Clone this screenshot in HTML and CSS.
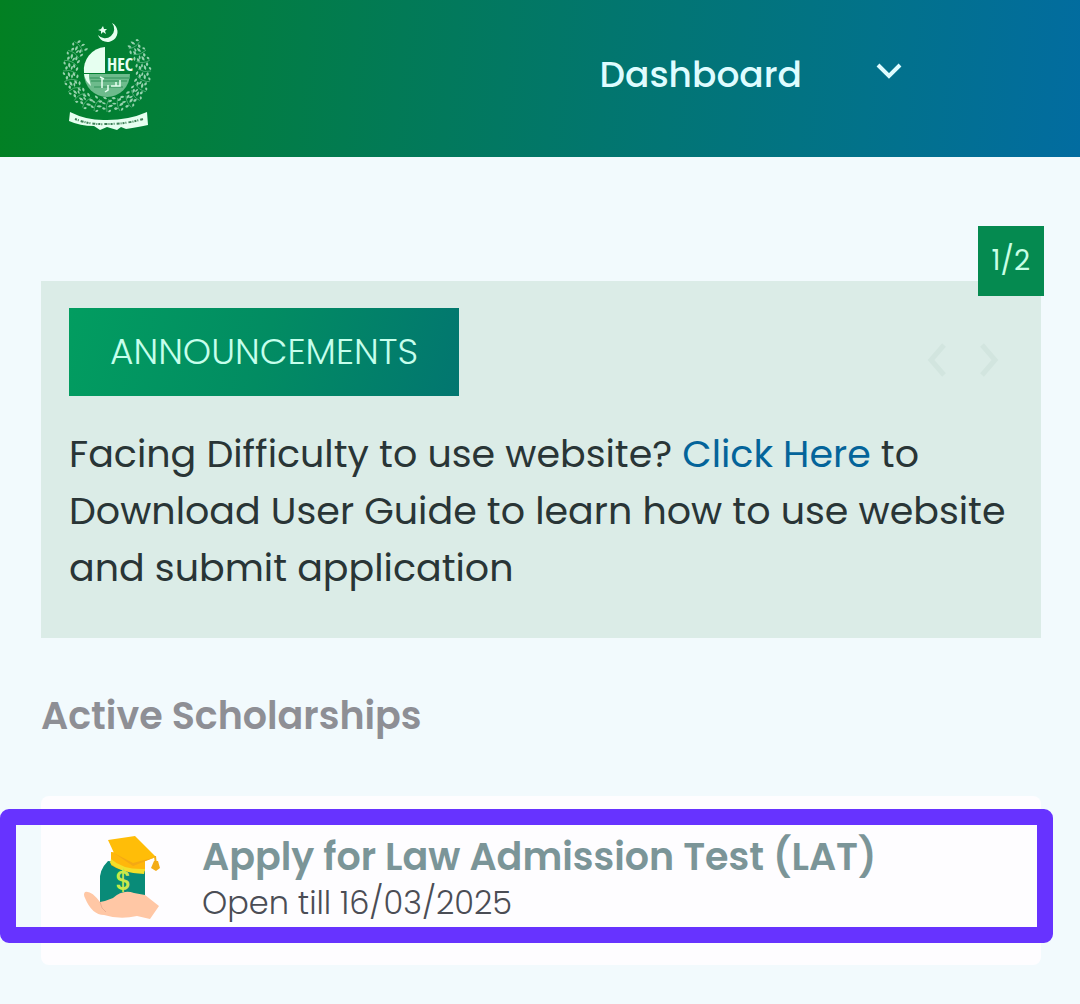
FILE: index.html
```html
<!DOCTYPE html>
<html lang="en">
<head>
<meta charset="utf-8">
<meta name="viewport" content="width=device-width, initial-scale=1">
<title>HEC Dashboard</title>
<link rel="stylesheet" href="styles.css">
</head>
<body>
<header class="topbar">
  <a class="logo" href="#" aria-label="HEC home">
    <svg width="94" height="114" viewBox="0 0 94 114" fill="#e6fff0">
      <defs>
        <g id="sprig">
          <path d="M0 -31q3-1 4 2q-3 1-4-2zM-1 -34q-4-1-4 2q3 1 4-2zM1 -36q4-1 4 2q-3 0-4-2zM-1 -39q-4-1-5 2q4 1 5-2zM1 -41q3-2 4 1q-2 2-4-1zM-1 -44q-3-1-3 2q2 1 3-2z"/>
          <path d="M-2 -31Q2 -37 0 -44" fill="none" stroke="#9ad9b4" stroke-width=".7"/>
        </g>
      </defs>
      <path d="M52 3a10 10 0 1 1-14 12a8 8 0 1 0 14-12z"/>
      <path d="M43 6l1 3 3 0-2 2 1 3-3-2-2 2 0-3-3-1 3-1z"/>
      <g transform="translate(47 51)" opacity=".65">
        <use href="#sprig" transform="rotate(48)"/><use href="#sprig" transform="rotate(62)"/>
        <use href="#sprig" transform="rotate(76)"/><use href="#sprig" transform="rotate(90)"/>
        <use href="#sprig" transform="rotate(104)"/><use href="#sprig" transform="rotate(118)"/>
        <use href="#sprig" transform="rotate(132)"/><use href="#sprig" transform="rotate(146)"/>
        <use href="#sprig" transform="rotate(162) translate(0 2)"/><use href="#sprig" transform="rotate(180) translate(0 3)"/>
        <use href="#sprig" transform="rotate(198) translate(0 2)"/><use href="#sprig" transform="rotate(214)"/>
        <use href="#sprig" transform="rotate(228)"/><use href="#sprig" transform="rotate(242)"/>
        <use href="#sprig" transform="rotate(256)"/><use href="#sprig" transform="rotate(270)"/>
        <use href="#sprig" transform="rotate(284)"/><use href="#sprig" transform="rotate(298)"/>
        <use href="#sprig" transform="rotate(312)"/>
      </g>
      <path d="M45 27v26H24A23 23 0 0 1 45 27z"/>
      <path d="M24 54h46A23 23 0 0 1 24 54z" fill="#6dbb8c"/>
      <path d="M24 54h5v4l2 8q-6-5-7-12z"/>
      <path d="M30 58h39M31 61h36M34 67h29" stroke="#168142" stroke-width=".7"/>
      <path d="M40 57l4 2M42 58v10M48 65v5l-3 2M51 66h9v-6M56 62v4" fill="none" stroke="#e6fff0" stroke-width="1.5"/>
      <path d="M46 28v25h24" fill="none" stroke="#067a34" stroke-width="1"/>
      <text class="logo-text" x="47" y="51">HEC</text>
      <path d="M10 92q18 9 37 8q22 0 40-8l1 13q-9 2-22 4l-5-2-4 3-10-3-7 3-6-4q-14 0-25-5z"/>
      <path d="M15 99q15 6 32 5q20 0 36-5" fill="none" stroke="#3c7f55" stroke-width="2" stroke-dasharray="2 1 1 2 3 1 1 1"/>
    </svg>
  </a>
  <button class="menu" type="button">
    <span>Dashboard</span>
    <svg width="26" height="18" viewBox="0 0 26 18" fill="none" stroke="#dffcff" stroke-width="4" aria-hidden="true"><path d="M2 3l11 11L24 3"/></svg>
  </button>
</header>
<main class="content">
  <section class="announce">
    <span class="count">1/2</span>
    <div class="announce-head">
      <h2 class="tag">ANNOUNCEMENTS</h2>
      <div class="pager">
        <button type="button" aria-label="Previous"><svg width="20" height="34" viewBox="0 0 20 34"><path d="M17 2L4 17l13 15"/></svg></button>
        <button type="button" aria-label="Next"><svg width="20" height="34" viewBox="0 0 20 34"><path d="M3 2l13 15L3 32"/></svg></button>
      </div>
    </div>
    <p class="message">Facing Difficulty to use website? <a href="#">Click Here</a> to Download User Guide to learn how to use website and submit application</p>
  </section>
  <h2 class="section-title">Active Scholarships</h2>
  <article class="card">
    <svg class="card-icon" width="78" height="86" viewBox="0 0 78 86" aria-hidden="true">
      <path d="M24 26Q15 35 16 46v24h45V31z" fill="#098b78"/>
      <path d="M27 17v13q13 9 34 6V20z" fill="#ffb70b"/>
      <path d="M27 24q12 11 34 10l-1 5q-23-1-34-11z" fill="#f3df29"/>
      <path d="M24 5l27-4 21 21-23 8-19-12z" fill="#ffbd08"/>
      <path d="M30 18l19 10 23-6-23 9z" fill="#f4a914"/>
      <path d="M71 21l1 9" stroke="#f4af17" stroke-width="2"/>
      <path d="M70 26h4l2 7-4 3-5-3z" fill="#f3ac17"/>
      <text class="dollar" x="31" y="55">$</text>
      <path d="M1 57q6-2 15 10q6-1 13-4q10-9 21-5l11 2 14 11-9 13-13-3q-17 4-33-1Q8 80 1 63q-2-4 0-6z" fill="#ffc7a5"/>
      <path d="M16 67q1 7 6 10" fill="none" stroke="#eaae92" stroke-width="1"/>
    </svg>
    <div>
      <h3 class="card-title"><a href="#">Apply for Law Admission Test (LAT)</a></h3>
      <p class="card-date">Open till 16/03/2025</p>
    </div>
    <span class="highlight"></span>
  </article>
</main>
</body>
</html>
```
FILE: styles.css
```css
* { box-sizing: border-box; }
body {
  margin: 0;
  background: #f2fafd;
  color: #293536;
  font-family: Poppins, Inter, "Open Sans", sans-serif;
}
h2, h3, p { margin: 0; }
a { text-decoration: none; color: inherit; }
button { border: 0; padding: 0; background: none; font: inherit; color: inherit; }
svg { display: block; }

.topbar {
  display: flex;
  justify-content: space-between;
  align-items: flex-start;
  padding: 20px 178px 23px 60px;
  background: linear-gradient(96deg, #028022 0%, #027f38 15%, #027a56 37%, #02766e 56%, #02728a 80%, #026ca0 100%);
}
.logo-text { font: 700 18px "Open Sans Condensed", "Liberation Sans Narrow", "DejaVu Sans Condensed", sans-serif; }
.menu {
  display: flex;
  gap: 74px;
  align-items: center;
  padding-top: 28px;
  color: #dffcff;
  font-size: 36px;
  line-height: 54px;
  font-weight: 500;
}
.menu svg { margin-bottom: 8px; }

.content { padding: 124px 39px 40px 41px; }
.announce {
  position: relative;
  padding: 27px 24px 42px 28px;
  background: #dbece7;
}
.count {
  position: absolute;
  top: -55px;
  right: -3px;
  padding: 0 14px;
  background: #058a50;
  color: #c8ffe5;
  font-size: 28px;
  line-height: 70px;
}
.announce-head {
  display: flex;
  align-items: center;
  justify-content: space-between;
  margin-bottom: 29px;
}
.tag {
  padding: 0 41px;
  background: linear-gradient(105deg, #029d60 0%, #028c62 50%, #027670 100%);
  color: #c6ffec;
  font-size: 36px;
  font-weight: 300;
  line-height: 88px;
}
.pager { display: flex; gap: 32px; padding: 16px 18px 0 0; }
.pager path { fill: none; stroke: #d2e5df; stroke-width: 5; }
.message { font-size: 38px; line-height: 57px; }
.message a { color: #04649a; }
.section-title {
  margin: 50px 0 52px;
  color: #8e8f95;
  font-size: 38px;
  font-weight: 600;
  line-height: 56px;
}
.card {
  position: relative;
  display: flex;
  gap: 40px;
  padding: 37px 43px 40px;
  border-radius: 8px;
  background: #fefdff;
}
.card-icon { flex: none; margin-top: 2px; }
.dollar { fill: #c9e84a; font-size: 26px; font-weight: 500; }
.card-title { color: #7b9598; font-size: 38px; font-weight: 600; line-height: 48px; }
.card-date { color: #4b4d55; font-size: 32px; font-weight: 300; line-height: 44px; }
.highlight {
  position: absolute;
  inset: 13px -12px 22px -41px;
  border: 16px solid #6733ff;
  border-radius: 9px;
}
```
